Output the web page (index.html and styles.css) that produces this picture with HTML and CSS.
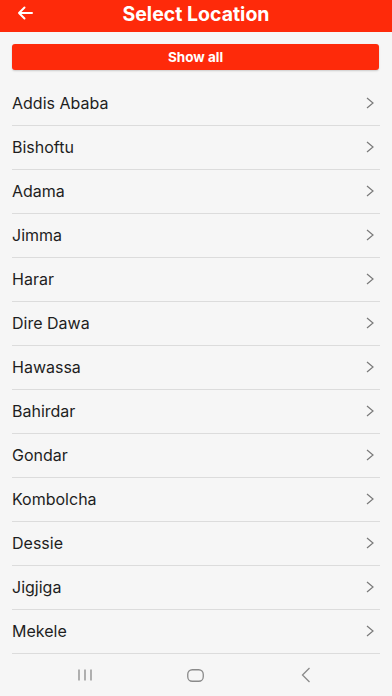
FILE: index.html
```html
<!DOCTYPE html>
<html>
<head>
<meta charset="utf-8">
<link rel="stylesheet" href="styles.css">
</head>
<body>
<div class="app">
  <header class="topbar">
    <svg class="back" width="16" height="14" viewBox="0 0 16 14"><path d="M15 7H2M7.5 1.5L2 7l5.5 5.5" fill="none" stroke="#fff" stroke-width="2" stroke-linecap="round" stroke-linejoin="round"/></svg>
    <h1 class="title">Select Location</h1>
  </header>
  <main class="content">
    <button class="show-all">Show all</button>
    <ul class="list">
      <li class="row"><span>Addis Ababa</span><svg class="chev" width="8" height="12" viewBox="0 0 8 12"><path d="M1 1l6 5-6 5" fill="none" stroke="#7a7a7a" stroke-width="1.2"/></svg></li>
      <li class="row"><span>Bishoftu</span><svg class="chev" width="8" height="12" viewBox="0 0 8 12"><path d="M1 1l6 5-6 5" fill="none" stroke="#7a7a7a" stroke-width="1.2"/></svg></li>
      <li class="row"><span>Adama</span><svg class="chev" width="8" height="12" viewBox="0 0 8 12"><path d="M1 1l6 5-6 5" fill="none" stroke="#7a7a7a" stroke-width="1.2"/></svg></li>
      <li class="row"><span>Jimma</span><svg class="chev" width="8" height="12" viewBox="0 0 8 12"><path d="M1 1l6 5-6 5" fill="none" stroke="#7a7a7a" stroke-width="1.2"/></svg></li>
      <li class="row"><span>Harar</span><svg class="chev" width="8" height="12" viewBox="0 0 8 12"><path d="M1 1l6 5-6 5" fill="none" stroke="#7a7a7a" stroke-width="1.2"/></svg></li>
      <li class="row"><span>Dire Dawa</span><svg class="chev" width="8" height="12" viewBox="0 0 8 12"><path d="M1 1l6 5-6 5" fill="none" stroke="#7a7a7a" stroke-width="1.2"/></svg></li>
      <li class="row"><span>Hawassa</span><svg class="chev" width="8" height="12" viewBox="0 0 8 12"><path d="M1 1l6 5-6 5" fill="none" stroke="#7a7a7a" stroke-width="1.2"/></svg></li>
      <li class="row"><span>Bahirdar</span><svg class="chev" width="8" height="12" viewBox="0 0 8 12"><path d="M1 1l6 5-6 5" fill="none" stroke="#7a7a7a" stroke-width="1.2"/></svg></li>
      <li class="row"><span>Gondar</span><svg class="chev" width="8" height="12" viewBox="0 0 8 12"><path d="M1 1l6 5-6 5" fill="none" stroke="#7a7a7a" stroke-width="1.2"/></svg></li>
      <li class="row"><span>Kombolcha</span><svg class="chev" width="8" height="12" viewBox="0 0 8 12"><path d="M1 1l6 5-6 5" fill="none" stroke="#7a7a7a" stroke-width="1.2"/></svg></li>
      <li class="row"><span>Dessie</span><svg class="chev" width="8" height="12" viewBox="0 0 8 12"><path d="M1 1l6 5-6 5" fill="none" stroke="#7a7a7a" stroke-width="1.2"/></svg></li>
      <li class="row"><span>Jigjiga</span><svg class="chev" width="8" height="12" viewBox="0 0 8 12"><path d="M1 1l6 5-6 5" fill="none" stroke="#7a7a7a" stroke-width="1.2"/></svg></li>
      <li class="row"><span>Mekele</span><svg class="chev" width="8" height="12" viewBox="0 0 8 12"><path d="M1 1l6 5-6 5" fill="none" stroke="#7a7a7a" stroke-width="1.2"/></svg></li>
    </ul>
  </main>
  <nav class="navbar">
    <svg class="nav-recent" width="16" height="12" viewBox="0 0 16 12"><path d="M2 0.5v11M8 0.5v11M14 0.5v11" stroke="#8a8a8a" stroke-width="1.3"/></svg>
    <svg class="nav-home" width="17" height="13" viewBox="0 0 17 13"><rect x="0.75" y="0.75" width="15.5" height="11.5" rx="4.5" fill="none" stroke="#8a8a8a" stroke-width="1.3"/></svg>
    <svg class="nav-back" width="10" height="16" viewBox="0 0 10 16"><path d="M8.5 1L1.5 8l7 7" fill="none" stroke="#8a8a8a" stroke-width="1.3"/></svg>
  </nav>
</div>
</body>
</html>
```

FILE: styles.css
```css
* { box-sizing: border-box; }
html, body { margin: 0; padding: 0; }
body {
  background: #f6f6f6;
  font-family: Inter, Roboto, "Liberation Sans", Arial, sans-serif;
  width: 392px;
  height: 696px;
  overflow: hidden;
}
.app {
  display: flex;
  flex-direction: column;
  height: 696px;
}
.topbar {
  height: 32px;
  padding-bottom: 4px;
  background: #fe2a0a;
  display: flex;
  align-items: center;
  justify-content: center;
  position: relative;
  flex: none;
}
.back {
  position: absolute;
  left: 17px;
  top: 6px;
}
.title {
  margin: 0;
  color: #fff;
  font-size: 19.5px;
  font-weight: 700;
  line-height: 28px;
}
.content {
  flex: 1;
  padding: 12px 12px 0 12px;
  overflow: hidden;
}
.show-all {
  display: block;
  width: 367px;
  height: 26px;
  border: none;
  border-radius: 3px;
  background: #fe2a0a;
  color: #fff;
  font-family: Inter, Roboto, "Liberation Sans", Arial, sans-serif;
  font-size: 13.5px;
  font-weight: 700;
  padding: 0;
  margin: 0 0 12px 0;
  box-shadow: 0 1px 2px rgba(0,0,0,0.18);
}
.list {
  list-style: none;
  margin: 0;
  padding: 0;
  width: 368px;
}
.row {
  height: 44px;
  border-bottom: 1.5px solid #dcdcdc;
  display: flex;
  align-items: center;
  justify-content: space-between;
  padding-right: 6px;
  padding-bottom: 1px;
  font-size: 16px;
  color: #1e1e1e;
}
.chev { flex: none; }
.navbar {
  height: 42px;
  flex: none;
  display: flex;
  align-items: center;
  background: #f6f6f6;
  padding-left: 77px;
}
.nav-home { margin-left: 94px; }
.nav-back { margin-left: 97px; }
```
